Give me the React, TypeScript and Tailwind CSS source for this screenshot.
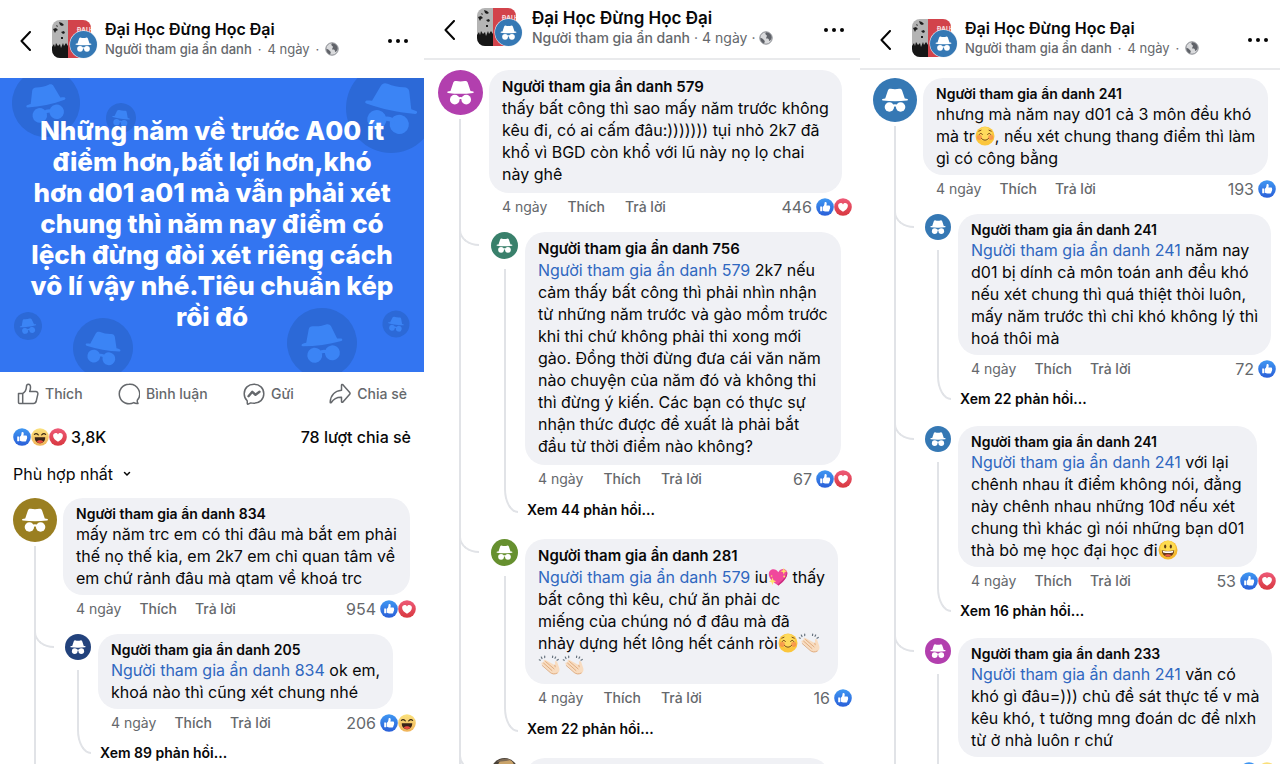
import React from 'react';
import clsx from 'clsx';

type Reaction = 'like' | 'love' | 'haha';

const HatGlyph: React.FC = () => (
  <>
    <path d="M12.2 20.5 14.9 12.4c.4-1.3 1.6-1.9 3-1.6 2.7.6 5.5.6 8.2 0 1.4-.3 2.6.3 3 1.6l2.7 8.1c1 .1 2 .2 2.6.4.8.3.7 1.4-.2 1.5-8 1.1-16.4 1.1-24.4 0-.9-.1-1-1.2-.2-1.5.6-.2 1.6-.3 2.6-.4z" />
    <circle cx="16.4" cy="29" r="4.7" />
    <circle cx="27.6" cy="29" r="4.7" />
    <path d="M19 27.2c2-1.2 4-1.2 6 0v2c-2-1-4-1-6 0z" />
  </>
);

const Avatar: React.FC<{ color: string; className?: string }> = ({ color, className }) => (
  <svg viewBox="0 0 44 44" className={clsx('shrink-0', className)} aria-hidden="true">
    <circle cx="22" cy="22" r="22" fill={color} />
    <g fill="#fff">
      <HatGlyph />
    </g>
  </svg>
);

const ReactionIcon: React.FC<{ type: Reaction }> = ({ type }) => (
  <svg viewBox="0 0 18 18" className="size-[18px] shrink-0" aria-hidden="true">
    <defs>
      <linearGradient id="like" x1="0" y1="0" x2="0" y2="1">
        <stop offset="0" stopColor="#3f97f2" />
        <stop offset="1" stopColor="#2a5fd8" />
      </linearGradient>
      <linearGradient id="love" x1="0" y1="0" x2="0" y2="1">
        <stop offset="0" stopColor="#ee5a78" />
        <stop offset="1" stopColor="#d8383f" />
      </linearGradient>
      <linearGradient id="haha" x1="0" y1="0" x2="0" y2="1">
        <stop offset="0" stopColor="#fbe27c" />
        <stop offset="1" stopColor="#f0b35a" />
      </linearGradient>
    </defs>
    {type === 'like' && (
      <>
        <circle cx="9" cy="9" r="8.8" fill="url(#like)" />
        <path
          fill="#fff"
          d="M4.2 8.4h1.7c.3 0 .5.2.5.5v3.9c0 .3-.2.5-.5.5H4.8a.6.6 0 0 1-.6-.6zM7 8.6C8.2 7.6 8.4 6.5 8.5 5.2c0-.8.4-1.200 1-1.200.9 0 1.300.8 1.200 1.800 0 .6-.2 1.200-.3 1.700h2.500c.8 0 1.300.6 1.100 1.300.3.400.3.900 0 1.300.1.500 0 .9-.4 1.200.1.500-.1.900-.4 1.100 0 .8-.5 1.100-1.200 1.100H9.400c-.9 0-1.600-.2-2.400-.7z"
        />
      </>
    )}
    {type === 'love' && (
      <>
        <circle cx="9" cy="9" r="8.8" fill="url(#love)" />
        <path fill="#fff" d="M9 13.8C6.4 12.2 4.1 10.2 4.1 7.7c0-2.900 3.700-3.700 4.900-1.300 1.200-2.400 4.900-1.600 4.900 1.300 0 2.500-2.300 4.500-4.900 6.100z" />
      </>
    )}
    {type === 'haha' && (
      <>
        <circle cx="9" cy="9" r="8.8" fill="url(#haha)" />
        <path d="M3.4 6.4c1.3-1.2 2.5-.9 3.9.5M14.600 6.400c-1.300-1.200-2.500-.9-3.900.5" fill="none" stroke="#3a2a14" strokeWidth="1.2" strokeLinecap="round" />
        <path d="M3.8 9.2h10.4c.2 3.6-2.2 6-5.2 6s-5.400-2.400-5.200-6z" fill="#3a2418" />
        <path d="M5.6 13.6c1.8-1.7 5-1.7 6.8 0-.9 1-2.1 1.6-3.4 1.6s-2.5-.6-3.4-1.6z" fill="#e8493f" />
      </>
    )}
  </svg>
);

const emojiClass = 'inline-block size-5 align-[-4px]';

const SmileEmoji: React.FC = () => (
  <svg viewBox="0 0 20 20" className={emojiClass} role="img" aria-label="☺️">
    <circle cx="10" cy="10" r="9.5" fill="#fbc63c" />
    <circle cx="10" cy="8" r="7" fill="#fedb5c" />
    <circle cx="4.3" cy="11.3" r="2.6" fill="#f58a4b" opacity=".75" />
    <circle cx="15.7" cy="11.3" r="2.6" fill="#f58a4b" opacity=".75" />
    <path d="M4.2 8.5c.8-1.6 2.4-1.6 3.2 0M12.6 8.5c.8-1.6 2.4-1.6 3.2 0M6.5 12.5c1.8 2.3 5.2 2.3 7 0M3.8 5.2l2.2-1M16.2 5.2l-2.2-1" fill="none" stroke="#7a4a17" strokeWidth="1" strokeLinecap="round" />
  </svg>
);

const GrinEmoji: React.FC = () => (
  <svg viewBox="0 0 20 20" className={emojiClass} role="img" aria-label="😃">
    <circle cx="10" cy="10" r="9.5" fill="#f6b92f" />
    <circle cx="10" cy="8.6" r="7.8" fill="#fddb4f" />
    <ellipse cx="7.2" cy="6.5" rx="1.1" ry="2" fill="#5c3a15" />
    <ellipse cx="12.8" cy="6.5" rx="1.1" ry="2" fill="#5c3a15" />
    <path d="M3.8 10.3c4 1 8.4 1 12.4 0 0 4-2.7 6.5-6.2 6.5s-6.2-2.5-6.2-6.5z" fill="#6b3a17" />
    <path d="M4.6 10.7c3.6.8 7.2.8 10.8 0l-.5 1.7c-3 .8-6.800.8-9.800 0z" fill="#fff" />
    <path d="M6.6 15.3c1.8-1.3 5-1.3 6.8 0-1.9 1.9-4.9 1.9-6.8 0z" fill="#ec5a4c" />
  </svg>
);

const HeartEmoji: React.FC = () => (
  <svg viewBox="0 0 20 20" className={emojiClass} role="img" aria-label="💖">
    <path d="M10.5 18.5C5 15 .8 11.4.8 6.9.8 1.6 7.8.4 10.3 5.2c2.3-4.900 9.300-4 9 1.400-.3 4.600-4 8.400-8.800 11.900z" fill="#f0489c" />
    <path d="M10.5 18.5c4.8-3.5 8.5-7.3 8.8-11.9 0-1-.2-1.8-.6-2.5.2 5.5-4.2 9.5-9.4 13.600z" fill="#c92f80" />
    <path d="m15.8.8.9 2.5 2.500.9-2.500.9-.9 2.500-.9-2.500-2.500-.9 2.500-.9zM4.500 10.500l1 2.800 2.800 1-2.800 1-1 2.800-1-2.800-2.800-1 2.800-1z" fill="#fde26a" />
    <circle cx="16.2" cy="9.6" r="1" fill="#fde26a" />
    <circle cx="3.6" cy="9" r=".8" fill="#fde26a" />
  </svg>
);

const ClapEmoji: React.FC = () => (
  <svg viewBox="0 0 24 20" className="inline-block h-5 w-6 align-[-4px]" role="img" aria-label="👏🏻">
    <path d="M3.6 7.8c.6-.8 1.6-.7 2.3 0l-.4-2c.2-1.2 1.6-1.4 2.4-.5l9.2 5-.2-3.500c.3-1.200 1.700-1.200 2.200-.1l2.200 6.500c.6 2.300-.3 4.300-2 5.300-2.400 1.400-5 .9-7-1L3.700 9.300c-.4-.5-.5-1.100-.1-1.500z" fill="#f8dcc0" />
    <path d="m5.5 8 8.5 7.6M7.6 6.6l8.5 7.3M4.2 10.5l8 7c2 1.6 4.6 2 7 .6M16.8 10.2l.4 1.6" fill="none" stroke="#d9a06f" strokeWidth=".8" strokeLinecap="round" />
    <path d="m2.2 5.3-.9-.5M4 3.5l-.7-1.4M6.7 2.6V1.1M14.5 2.5l.2-1.3M17 3.3l.7-1.3M19 5.2l1.3-.8" fill="none" stroke="#65717c" strokeWidth="1.2" strokeLinecap="round" />
  </svg>
);

const GroupThumb: React.FC = () => (
  <svg viewBox="0 0 46 39" className="h-[39px] w-[46px] shrink-0" aria-hidden="true">
    <clipPath id="thumb">
      <rect width="39" height="38" rx="8" />
    </clipPath>
    <g clipPath="url(#thumb)">
      <rect width="16" height="38" fill="#b4b4b4" />
      <rect x="16" width="23" height="38" fill="#d2434b" />
      <path d="M0 27l2-3 1 3 1-4 2 3 2-2 1 4 2-5 1 3 2-3 2 3v14H0z" fill="#161616" />
      <path d="m7 2 3 1 2 2-2 1-2-1zM1 9l3-1 2 2-2 1-1 2zM9 12l3-1 1 2-2 1zM4 5l2 1-1 1zM9 17h2v2H9z" fill="#1d1d1d" />
      <text x="25" y="12" fontSize="6" fontWeight="800" fill="#f6d9da" fontFamily="Inter, sans-serif">
        ĐẠI H
      </text>
    </g>
    <circle cx="31.5" cy="24.5" r="14" fill="#e9eef4" />
    <svg x="18" y="11" width="27" height="27" viewBox="0 0 44 44">
      <circle cx="22" cy="22" r="22" fill="#3578b4" />
      <g fill="#fff">
        <HatGlyph />
      </g>
    </svg>
  </svg>
);

const Globe: React.FC = () => (
  <svg viewBox="0 0 14 14" className="size-[14px]" aria-hidden="true">
    <circle cx="7" cy="7" r="6.2" fill="#d9dadc" stroke="#7b7e83" strokeWidth=".9" />
    <path d="M7.2 1.2c3 .1 5.4 2.3 5.5 5.2-.2 1.5-1 2.6-1.9 3.6-.9-.3-1-1.2-1.1-2-.8-.2-1.9.1-2.4-.7-.3-1 .6-1.6.7-2.5-.6-.8-1.600-1.200-1.700-2.200.1-.6.4-1.100.9-1.400zM1.300 6.700c1 .3 2.300.6 2.900 1.600.5.900 1.500 1.200 1.600 2.300 0 .8-.5 1.400-.9 2-2.100-.8-3.700-3-3.600-5.900z" fill="#606369" />
  </svg>
);

const PostHeader: React.FC<{ wide?: boolean; className?: string }> = ({ wide, className }) => (
  <header className={clsx('flex shrink-0 items-center pl-5', className)}>
    <button aria-label="Quay lại" className={clsx('mt-1 shrink-0', wide ? 'w-[33px]' : 'w-8')}>
      <svg viewBox="0 0 12 20" className="h-5 w-3" fill="none" stroke="#050505" strokeWidth="2" strokeLinecap="round" strokeLinejoin="round">
        <path d="M10 1 1.5 10 10 19" />
      </svg>
    </button>
    <GroupThumb />
    <div className={clsx('min-w-0 flex-1 whitespace-nowrap', wide ? 'ml-[9px]' : 'ml-[7px]')}>
      <h2 className={clsx('leading-5 font-semibold text-[#080809]', wide ? 'text-[17px]' : 'text-base')}>Đại Học Đừng Học Đại</h2>
      <p className={clsx('flex items-center leading-5 text-[#65686c]', wide ? 'gap-1 text-sm' : 'gap-[6px] text-[13px]')}>
        <span className="font-medium">Người tham gia ẩn danh</span>
        <span>·</span>
        <span>4 ngày</span>
        <span>·</span>
        <Globe />
      </p>
    </div>
    <button aria-label="Tùy chọn khác" className="mt-1 shrink-0">
      <svg viewBox="0 0 20 4" className="h-1 w-5" fill="#050505">
        <circle cx="2" cy="2" r="2" />
        <circle cx="10" cy="2" r="2" />
        <circle cx="18" cy="2" r="2" />
      </svg>
    </button>
  </header>
);

interface BubbleProps {
  id: string;
  wide?: boolean;
  children: React.ReactNode;
}

const Bubble: React.FC<BubbleProps> = ({ id, wide, children }) => (
  <div className={clsx('w-fit rounded-[20px] bg-[#f0f1f5] px-[13px] whitespace-pre text-[#080809]', wide ? 'pt-[7px] pb-2' : 'pt-[6px] pb-[6px]')}>
    <h3 className={clsx('font-semibold', wide ? 'text-[15px] leading-5' : 'text-sm leading-[19px]')}>Người tham gia ẩn danh {id}</h3>
    <p className="text-base leading-[22px]">{children}</p>
  </div>
);

const Meta: React.FC<{ count: string; reactions: Reaction[]; wide?: boolean }> = ({ count, reactions, wide }) => (
  <div className="flex h-[27px] items-center pl-[13px] text-sm whitespace-nowrap text-[#65686c]">
    <div className={clsx('flex', wide ? 'gap-5' : 'gap-[18px]')}>
      <span>4 ngày</span>
      <button className="font-medium">Thích</button>
      <button className="font-medium">Trả lời</button>
    </div>
    <span className="mr-1 ml-auto text-base">{count}</span>
    {reactions.map((r) => (
      <ReactionIcon key={r} type={r} />
    ))}
  </div>
);

interface CommentProps extends BubbleProps {
  color: string;
  count: string;
  reactions: Reaction[];
  replies?: React.ReactNode;
  more?: string;
}

const Comment: React.FC<CommentProps> = ({ color, count, reactions, replies, wide, ...bubble }) => (
  <article className="flex min-h-0 flex-1 gap-[6px] pl-[13px]">
    <div className={clsx('flex shrink-0 flex-col items-center', wide ? 'w-[46px]' : 'w-[44px]')}>
      <Avatar color={color} className={wide ? 'size-[45px]' : 'size-[44px]'} />
      <div className="mt-1 w-[2px] flex-1 bg-[#e1e3e7]" />
    </div>
    <div className="min-w-0 flex-1">
      <Bubble wide={wide} {...bubble} />
      <Meta wide={wide} count={count} reactions={reactions} />
      {replies}
    </div>
  </article>
);

// curve from the parent thread line to a reply's avatar
const Elbow: React.FC<{ wide?: boolean }> = ({ wide }) => (
  <div className={clsx('absolute -top-5 h-[34px] w-5 rounded-bl-[20px_16px] border-b-2 border-l-2 border-[#e1e3e7]', wide ? '-left-[30px]' : '-left-[29px]')} />
);

const Reply: React.FC<CommentProps> = ({ color, count, reactions, wide, more, ...bubble }) => (
  <article className="relative mt-3 flex gap-[7px] pl-[2px]">
    <Elbow wide={wide} />
    <div className={clsx('flex shrink-0 flex-col', wide ? 'w-[27px]' : 'w-[26px]')}>
      <Avatar color={color} className={wide ? 'size-[27px]' : 'size-[26px]'} />
      <div className={clsx('mt-[10px] w-[14px] flex-1 self-end border-l-2 border-[#e1e3e7]', more && 'mb-[14px] rounded-bl-[14px_24px] border-b-2')} />
    </div>
    <div className="min-w-0 flex-1">
      <Bubble wide={wide} {...bubble} />
      <Meta wide={wide} count={count} reactions={reactions} />
      {more && (
        <button className={clsx('ml-[2px] block text-sm leading-5 font-semibold whitespace-nowrap text-[#080809]', wide ? 'mt-2 mb-[7px]' : 'mt-[7px] mb-[5px]')}>
          Xem {more} phản hồi...
        </button>
      )}
    </div>
  </article>
);

const PhotoAvatar: React.FC = () => (
  <svg viewBox="0 0 27 27" className="size-[27px] shrink-0" aria-hidden="true">
    <clipPath id="photo">
      <circle cx="13.5" cy="13.5" r="13.5" />
    </clipPath>
    <g clipPath="url(#photo)">
      <rect width="27" height="27" fill="#4a4238" />
      <ellipse cx="15" cy="8" rx="8" ry="7" fill="#c9a36a" />
      <path d="M6 4c3-4 10-4 14-2l-5 1z" fill="#7d6a55" />
    </g>
  </svg>
);

const Mention: React.FC<{ id: string }> = ({ id }) => (
  <a href="#" className="text-[#2f67c0]">
    Người tham gia ẩn danh {id}
  </a>
);

const decorations = [
  { x: 46, y: 25, r: 34, tilt: -12 },
  { x: 121, y: 40, r: 15, tilt: 8 },
  { x: 391, y: 30, r: 45, tilt: 12 },
  { x: 28, y: 248, r: 14, tilt: -8 },
  { x: 103, y: 270, r: 30, tilt: 10 },
  { x: 322, y: 265, r: 35, tilt: -8 },
  { x: 396, y: 246, r: 13.5, tilt: 8 },
];

const PostCard: React.FC = () => (
  <div className="relative flex h-[294px] shrink-0 items-center justify-center overflow-hidden bg-[#3375f1] pb-1">
    <svg viewBox="0 0 424 294" preserveAspectRatio="xMidYMid slice" className="absolute inset-0 size-full" aria-hidden="true">
      {decorations.map((d) => (
        <g key={`${d.x}-${d.y}`} transform={`translate(${d.x} ${d.y}) rotate(${d.tilt}) scale(${d.r / 22}) translate(-22 -22)`}>
          <circle cx="22" cy="22" r="22" fill="#2c69d7" />
          <g fill="#3b84f5">
            <HatGlyph />
          </g>
        </g>
      ))}
    </svg>
    <p className="relative text-center text-[26px] leading-[31px] font-extrabold whitespace-pre text-white">
      {`Những năm về trước A00 ít
điểm hơn,bất lợi hơn,khó
hơn d01 a01 mà vẫn phải xét
chung thì năm nay điểm có
lệch đừng đòi xét riêng cách
vô lí vậy nhé.Tiêu chuẩn kép
rồi đó`}
    </p>
  </div>
);

const actions = [
  {
    label: 'Thích',
    icon: <path d="M1.5 10.5h4.2v10H2.5a1 1 0 0 1-1-1zM5.700 10.500c2.600-1.600 3.600-3.500 3.700-6.500 0-1.700.7-2.800 1.900-2.800 1.600 0 2.300 1.500 2.200 3.400-.1 1.500-.4 2.800-.8 4h6c1.700 0 2.500 1.200 2.100 2.700l-1.600 7c-.4 1.500-1.200 2.200-2.800 2.200H5.700z" />,
  },
  {
    label: 'Bình luận',
    icon: <path d="M11 1.2a9.8 9.8 0 1 0 4.8 18.4c1.200.9 2.600 1.100 4.200.9-.7-1-.9-2-.7-3.200A9.800 9.800 0 0 0 11 1.200z" />,
  },
  {
    label: 'Gửi',
    icon: (
      <>
        <path d="M11 1.2c-5.6 0-9.8 4-9.8 9.5 0 2.9 1.1 5.3 3 7l.1 2.8c0 .5.5.8.9.6l2.500-1.200c1 .3 2.200.4 3.300.4 5.600 0 9.800-4 9.800-9.600S16.600 1.200 11 1.200z" />
        <path d="m5.5 13.2 3.8-4.4 3.2 3 4-3" strokeWidth="2.4" />
      </>
    ),
  },
  {
    label: 'Chia sẻ',
    icon: <path d="M12.5 2.3c0-.8.8-1.100 1.400-.6l6.800 7.700c.5.600.5 1.200 0 1.800l-6.800 7.900c-.6.500-1.400.2-1.400-.6v-4.300c-4.600-.2-7.800 1.500-10.200 5.300-.5.600-1.100.4-1.100-.3.300-6.600 4.400-11.300 11.300-12z" />,
  },
];

const App: React.FC = () => (
  <main className="grid h-screen grid-cols-[424fr_436fr_420fr] overflow-hidden bg-white font-['Inter',sans-serif]">
    <section className="flex min-h-0 min-w-0 flex-col overflow-hidden">
      <PostHeader className="h-[78px] pr-4" />
      <PostCard />
      <div className="flex h-[43px] shrink-0 items-center justify-between px-[17px] text-[#65686c]">
        {actions.map((a) => (
          <button key={a.label} className="flex items-center gap-[6px] text-sm font-medium">
            <svg viewBox="0 0 22 22" className="size-[22px]" fill="none" stroke="currentColor" strokeWidth="1.5" strokeLinejoin="round" strokeLinecap="round">
              {a.icon}
            </svg>
            {a.label}
          </button>
        ))}
      </div>
      <div className="flex h-[43px] shrink-0 items-center px-[13px] text-base font-medium text-[#080809]">
        <ReactionIcon type="like" />
        <ReactionIcon type="haha" />
        <ReactionIcon type="love" />
        <span className="ml-1">3,8K</span>
        <span className="ml-auto">78 lượt chia sẻ</span>
      </div>
      <div className="flex h-8 shrink-0 items-center px-[13px]">
        <select aria-label="Sắp xếp bình luận" className="appearance-none text-base text-[#080809] [field-sizing:content]">
          <option>Phù hợp nhất</option>
        </select>
        <svg viewBox="0 0 8 6" className="ml-[10px] h-[6px] w-2" fill="none" stroke="#050505" strokeWidth="1.5" strokeLinecap="round" aria-hidden="true">
          <path d="m1.5 1.5 2.5 2.5 2.5-2.5" />
        </svg>
      </div>
      <div className="flex min-h-0 flex-1 pt-2 pr-2">
        <Comment
          id="834"
          color="#9a7f21"
          count="954"
          reactions={['like', 'love']}
          replies={
            <Reply id="205" color="#22427c" count="206" reactions={['like', 'haha']} more="89">
              <Mention id="834" /> ok em,{'\n'}khoá nào thì cũng xét chung nhé
            </Reply>
          }
        >
          {`mấy năm trc em có thi đâu mà bắt em phải
thế nọ thế kia, em 2k7 em chỉ quan tâm về
em chứ rảnh đâu mà qtam về khoá trc`}
        </Comment>
      </div>
    </section>

    <section className="flex min-h-0 min-w-0 flex-col overflow-hidden">
      <PostHeader wide className="h-[60px] border-b-2 border-[#e9eaec] pr-4 pb-[3px]" />
      <div className="flex min-h-0 flex-1 pt-[10px] pr-2">
        <Comment
          wide
          id="579"
          color="#b23fae"
          count="446"
          reactions={['like', 'love']}
          replies={
            <>
              <Reply wide id="756" color="#39806b" count="67" reactions={['like', 'love']} more="44">
                <Mention id="579" />
                {` 2k7 nếu
cảm thấy bất công thì phải nhìn nhận
từ những năm trước và gào mồm trước
khi thi chứ không phải thi xong mới
gào. Đồng thời đừng đưa cái văn năm
nào chuyện của năm đó và không thi
thì đừng ý kiến. Các bạn có thực sự
nhận thức được đề xuất là phải bắt
đầu từ thời điểm nào không?`}
              </Reply>
              <Reply wide id="281" color="#66902f" count="16" reactions={['like']} more="22">
                <Mention id="579" /> iu
                <HeartEmoji />
                {` thấy
bất công thì kêu, chứ ăn phải dc
miếng của chúng nó đ đâu mà đã
nhảy dựng hết lông hết cánh ròi`}
                <SmileEmoji />
                <ClapEmoji />
                {'\n'}
                <ClapEmoji />
                <ClapEmoji />
              </Reply>
              <article className="relative mt-3 flex gap-[7px] pl-[2px]">
                <Elbow wide />
                <PhotoAvatar />
                <div className="mr-[22px] h-24 flex-1 rounded-[20px] bg-[#f0f1f5]" />
              </article>
            </>
          }
        >
          {`thấy bất công thì sao mấy năm trước không
kêu đi, có ai cấm đâu:))))))) tụi nhỏ 2k7 đã
khổ vì BGD còn khổ với lũ này nọ lọ chai
này ghê`}
        </Comment>
      </div>
    </section>

    <section className="flex min-h-0 min-w-0 flex-col overflow-hidden">
      <PostHeader className="h-[70px] border-b-2 border-[#e9eaec] pt-2 pr-3" />
      <div className="flex min-h-0 flex-1 pt-2 pr-1">
        <Comment
          id="241"
          color="#3578b4"
          count="193"
          reactions={['like']}
          replies={
            <>
              <Reply id="241" color="#3578b4" count="72" reactions={['like']} more="22">
                <Mention id="241" />
                {` năm nay
d01 bị dính cả môn toán anh đều khó
nếu xét chung thì quá thiệt thòi luôn,
mấy năm trước thì chỉ khó không lý thì
hoá thôi mà`}
              </Reply>
              <Reply id="241" color="#3578b4" count="53" reactions={['like', 'love']} more="16">
                <Mention id="241" />
                {` với lại
chênh nhau ít điểm không nói, đằng
này chênh nhau những 10đ nếu xét
chung thì khác gì nói những bạn d01
thà bỏ mẹ học đại học đi`}
                <GrinEmoji />
              </Reply>
              <Reply id="233" color="#b23fae" count="43" reactions={['like', 'haha']}>
                <Mention id="241" />
                {` văn có
khó gì đâu=))) chủ đề sát thực tế v mà
kêu khó, t tưởng mng đoán dc đề nlxh
từ ở nhà luôn r chứ`}
              </Reply>
            </>
          }
        >
          nhưng mà năm nay d01 cả 3 môn đều khó{'\n'}mà tr
          <SmileEmoji />
          {`, nếu xét chung thang điểm thì làm
gì có công bằng`}
        </Comment>
      </div>
    </section>
  </main>
);

export default App;
